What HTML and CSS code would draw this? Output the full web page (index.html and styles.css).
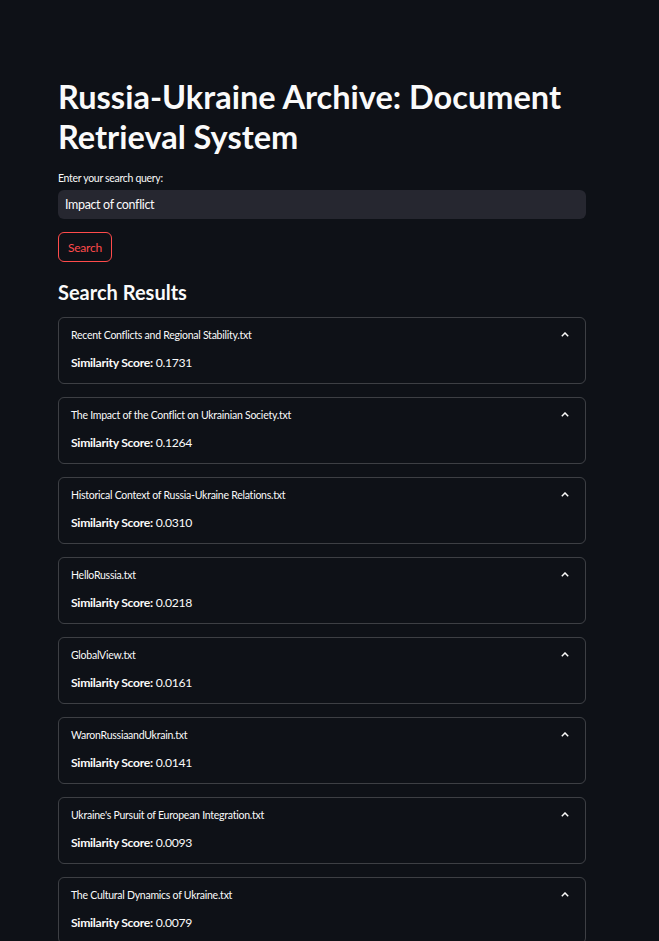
FILE: index.html
```html
<!DOCTYPE html>
<html lang="en">
<head>
<meta charset="utf-8">
<title>Russia-Ukraine Archive</title>
<link rel="stylesheet" href="styles.css">
</head>
<body>
<main class="main">
  <h1 class="title">Russia-Ukraine Archive: Document Retrieval System</h1>
  <label class="label" for="q">Enter your search query:</label>
  <div class="input"><span class="input-text">Impact of conflict</span></div>
  <div class="btn-row"><button class="btn">Search</button></div>
  <h2 class="subtitle">Search Results</h2>
  <div class="results">
    <div class="exp"><div class="exp-head"><span>Recent Conflicts and Regional Stability.txt</span><svg class="chev" viewBox="0 0 8 5"><path d="M0.8 4.2 L4 1 L7.2 4.2"/></svg></div><p class="score"><b>Similarity Score:</b> 0.1731</p></div>
    <div class="exp"><div class="exp-head"><span>The Impact of the Conflict on Ukrainian Society.txt</span><svg class="chev" viewBox="0 0 8 5"><path d="M0.8 4.2 L4 1 L7.2 4.2"/></svg></div><p class="score"><b>Similarity Score:</b> 0.1264</p></div>
    <div class="exp"><div class="exp-head"><span>Historical Context of Russia-Ukraine Relations.txt</span><svg class="chev" viewBox="0 0 8 5"><path d="M0.8 4.2 L4 1 L7.2 4.2"/></svg></div><p class="score"><b>Similarity Score:</b> 0.0310</p></div>
    <div class="exp"><div class="exp-head"><span>HelloRussia.txt</span><svg class="chev" viewBox="0 0 8 5"><path d="M0.8 4.2 L4 1 L7.2 4.2"/></svg></div><p class="score"><b>Similarity Score:</b> 0.0218</p></div>
    <div class="exp"><div class="exp-head"><span>GlobalView.txt</span><svg class="chev" viewBox="0 0 8 5"><path d="M0.8 4.2 L4 1 L7.2 4.2"/></svg></div><p class="score"><b>Similarity Score:</b> 0.0161</p></div>
    <div class="exp"><div class="exp-head"><span>WaronRussiaandUkrain.txt</span><svg class="chev" viewBox="0 0 8 5"><path d="M0.8 4.2 L4 1 L7.2 4.2"/></svg></div><p class="score"><b>Similarity Score:</b> 0.0141</p></div>
    <div class="exp"><div class="exp-head"><span>Ukraine's Pursuit of European Integration.txt</span><svg class="chev" viewBox="0 0 8 5"><path d="M0.8 4.2 L4 1 L7.2 4.2"/></svg></div><p class="score"><b>Similarity Score:</b> 0.0093</p></div>
    <div class="exp"><div class="exp-head"><span>The Cultural Dynamics of Ukraine.txt</span><svg class="chev" viewBox="0 0 8 5"><path d="M0.8 4.2 L4 1 L7.2 4.2"/></svg></div><p class="score"><b>Similarity Score:</b> 0.0079</p></div>
  </div>
</main>
</body>
</html>
```

FILE: styles.css
```css
html, body {
  margin: 0;
  padding: 0;
  background: #0e1117;
  color: #fafafa;
  font-family: Lato, "Noto Sans", sans-serif;
  height: 941px;
  overflow: hidden;
}
.main {
  width: 528px;
  margin: 0 auto 0 58px;
  padding-top: 77px;
  display: flex;
  flex-direction: column;
}
.title {
  margin: 0;
  font-size: 32.5px;
  line-height: 40px;
  font-weight: 700;
}
.label {
  margin-top: 13px;
  font-size: 10.5px;
  letter-spacing: -0.3px;
  line-height: 16px;
  display: block;
}
.input {
  margin-top: 4px;
  height: 29px;
  background: #262730;
  border-radius: 6px;
  display: flex;
  align-items: center;
  padding-left: 7px;
}
.input-text {
  font-size: 12.5px;
  letter-spacing: -0.35px;
}
.btn-row {
  margin-top: 13px;
  display: flex;
}
.btn {
  height: 30px;
  width: 54px;
  box-sizing: border-box;
  border: 1px solid #ff4b4b;
  border-radius: 6px;
  background: transparent;
  color: #ff4b4b;
  font-family: inherit;
  font-size: 12px;
  letter-spacing: -0.2px;
  padding: 0;
}
.subtitle {
  margin: 17px 0 0;
  font-size: 20px;
  line-height: 26px;
  font-weight: 700;
}
.results {
  margin-top: 12px;
  display: flex;
  flex-direction: column;
  gap: 13px;
}
.exp {
  height: 67px;
  box-sizing: border-box;
  border: 1px solid rgba(250, 250, 250, 0.2);
  border-radius: 6px;
  padding: 0 16px 0 12px;
}
.exp-head {
  display: flex;
  align-items: center;
  justify-content: space-between;
  height: 33px;
  font-size: 10.5px;
  letter-spacing: -0.25px;
}
.chev {
  width: 8px;
  height: 5px;
  fill: none;
  stroke: #fafafa;
  stroke-width: 1.5;
}
.score {
  margin: 4px 0 0;
  font-size: 12.2px;
  letter-spacing: -0.3px;
  line-height: 16px;
}
.score b {
  font-weight: 700;
}
```
